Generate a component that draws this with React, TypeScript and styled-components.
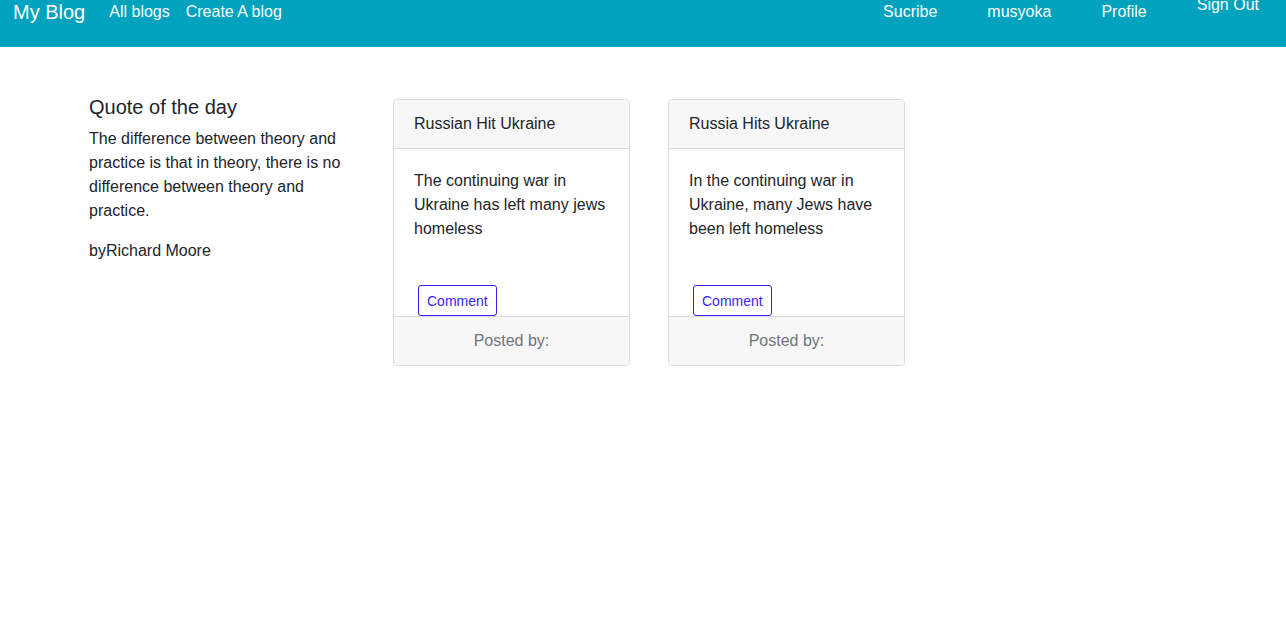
import React from 'react'
import styled, { createGlobalStyle } from 'styled-components'

const GlobalStyle = createGlobalStyle`
    body {
        margin: 0;
        font-family: 'Liberation Sans', Arial, sans-serif;
        font-size: 16px;
        line-height: 1.5;
        color: #212529;
        background: white;
    }
`

const Navbar = styled.nav`
    height: 47px;
    background: #00a2bd;
    display: flex;
    align-items: flex-start;
    padding: 0 19px 0 13px;
    box-sizing: border-box;
`

const Brand = styled.a`
    font-size: 20px;
    line-height: 24px;
    color: white;
    margin-right: 16px;
    text-decoration: none;
`

const NavLink = styled.a<{ $raised?: boolean }>`
    font-size: 16px;
    line-height: 24px;
    color: white;
    padding: 0 8px;
    margin-top: ${(p) => (p.$raised ? '-7px' : '0')};
    text-decoration: none;
    cursor: pointer;
`

const RightNav = styled.div`
    margin-left: auto;
    display: flex;
    gap: 34px;
`

const Main = styled.main`
    display: flex;
    align-items: flex-start;
    padding: 48px 0 0 89px;
`

const QuoteColumn = styled.section`
    width: 266px;
    margin-right: 38px;
`

const QuoteTitle = styled.h2`
    font-size: 20px;
    font-weight: 400;
    line-height: 24px;
    margin: 0 0 8px 0;
`

const QuoteText = styled.p`
    margin: 0 0 16px 0;
`

const QuoteAuthor = styled.p`
    margin: 0;
`

const Cards = styled.div`
    display: flex;
    gap: 38px;
    margin-top: 4px;
`

const Card = styled.article`
    width: 237px;
    border: 1px solid #dcdcdc;
    border-radius: 4px;
    overflow: hidden;
    box-sizing: border-box;
`

const CardHeader = styled.div`
    background: #f7f7f7;
    border-bottom: 1px solid #dcdcdc;
    padding: 12px 20px;
`

const CardBody = styled.div`
    padding: 20px 20px 0 20px;
    height: 167px;
    box-sizing: border-box;
    position: relative;
`

const CardText = styled.p`
    margin: 0;
`

const CommentButton = styled.button`
    position: absolute;
    left: 24px;
    bottom: 0;
    height: 31px;
    padding: 0 8px;
    font-family: 'Liberation Sans', Arial, sans-serif;
    font-size: 14px;
    color: #3b1efa;
    background: white;
    border: 1px solid #3b1efa;
    border-radius: 3px;
    cursor: pointer;
`

const CardFooter = styled.div`
    background: #f7f7f7;
    border-top: 1px solid #dcdcdc;
    padding: 12px 20px;
    text-align: center;
    color: #6c757d;
`

const posts = [
    {
        title: 'Russian Hit Ukraine',
        body: 'The continuing war in Ukraine has left many jews homeless',
    },
    {
        title: 'Russia Hits Ukraine',
        body: 'In the continuing war in Ukraine, many Jews have been left homeless',
    },
]

const App = () => {
    return (
        <>
            <GlobalStyle />
            <Navbar>
                <Brand>My Blog</Brand>
                <NavLink>All blogs</NavLink>
                <NavLink>Create A blog</NavLink>
                <RightNav>
                    <NavLink>Sucribe</NavLink>
                    <NavLink>musyoka</NavLink>
                    <NavLink>Profile</NavLink>
                    <NavLink $raised>Sign Out</NavLink>
                </RightNav>
            </Navbar>
            <Main>
                <QuoteColumn>
                    <QuoteTitle>Quote of the day</QuoteTitle>
                    <QuoteText>
                        The difference between theory and practice is that in
                        theory, there is no difference between theory and
                        practice.
                    </QuoteText>
                    <QuoteAuthor>byRichard Moore</QuoteAuthor>
                </QuoteColumn>
                <Cards>
                    {posts.map((post) => (
                        <Card key={post.title}>
                            <CardHeader>{post.title}</CardHeader>
                            <CardBody>
                                <CardText>{post.body}</CardText>
                                <CommentButton>Comment</CommentButton>
                            </CardBody>
                            <CardFooter>Posted by:</CardFooter>
                        </Card>
                    ))}
                </Cards>
            </Main>
        </>
    )
}

export default App
